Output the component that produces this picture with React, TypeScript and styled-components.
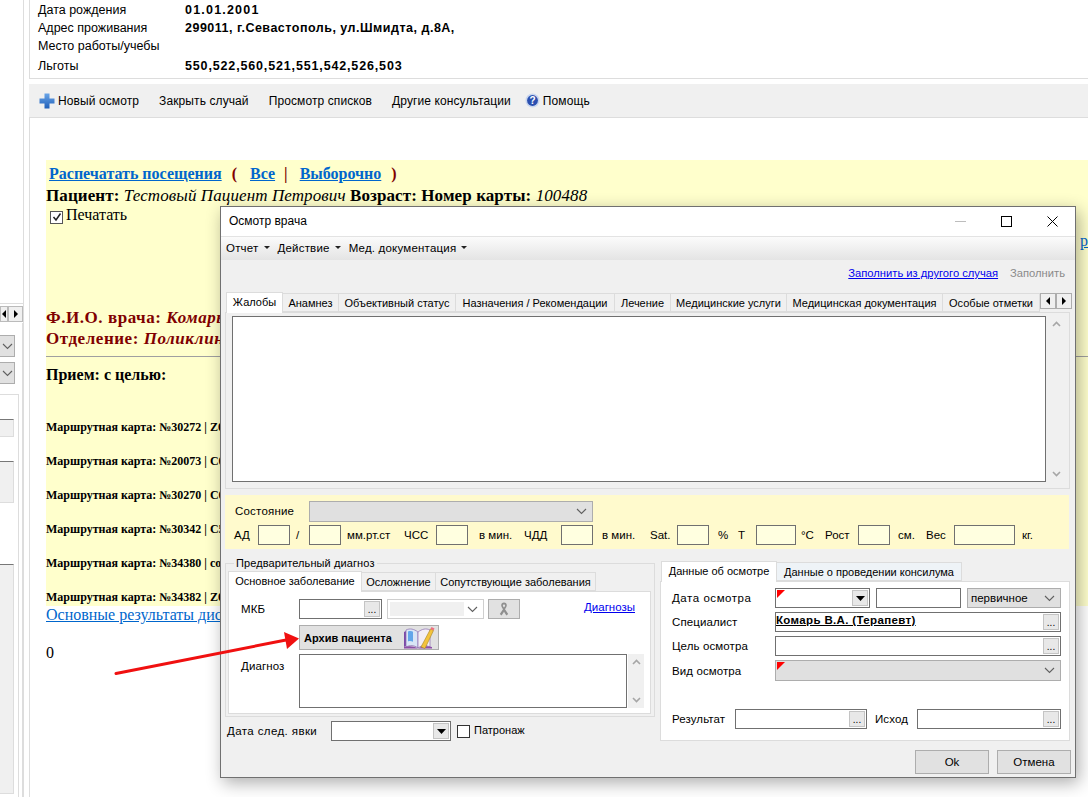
import styled, { createGlobalStyle } from 'styled-components';

const GlobalStyle = createGlobalStyle`
  html, body { margin: 0; padding: 0; background: #fff; }
  * { box-sizing: border-box; }
  body { font-family: "Liberation Sans", Arial, sans-serif; font-size: 12px; color: #000; }
`;

const flagCorner = `
  &::before {
    content: "";
    position: absolute;
    left: 1px;
    top: 1px;
    border-top: 8px solid #f00;
    border-right: 8px solid transparent;
  }
`;

const Page = styled.div`
  position: relative;
  display: flex;
  width: 1088px;
  height: 797px;
  overflow: hidden;
  background: #fff;
`;

/* left, cut off panel */
const Sidebar = styled.aside`
  flex: 0 0 29px;
  display: flex;
  flex-direction: column;
`;
const SideColumn = styled.div`
  width: 24px;
  flex: 1;
  padding-top: 303px;
  border-right: 1px solid #ddd;
  display: flex;
  flex-direction: column;
`;
const SideScroll = styled.div`
  display: flex;
  height: 20px;
  border-top: 1px solid #ddd;
  padding-top: 2px;
  width: 24px;
`;
const SideArrow = styled.div<{ $w: number }>`
  width: ${p => p.$w}px;
  height: 16px;
  background: #f0f0f0;
  border: 1px solid #bbb;
  display: flex;
  align-items: center;
  justify-content: center;
`;
const SidePanel = styled.div`
  flex: 1;
  width: 23px;
  border-right: 1px solid #ddd;
  padding-top: 12px;
`;
const SideSelect = styled.div`
  width: 15px;
  height: 22px;
  margin-bottom: 5px;
  background: #e1e1e1;
  border: 1px solid #adadad;
  border-left: 0;
  display: flex;
  align-items: center;
  justify-content: center;
  color: #666;
`;
const SideBox = styled.div`
  margin-top: 10px;
  width: 19px;
  height: 100%;
  border-right: 1px solid #ddd;
  border-top: 1px solid #ddd;
`;
const SideInput = styled.div<{ $top: number; $h: number }>`
  width: 14px;
  height: ${p => p.$h}px;
  margin-top: ${p => p.$top}px;
  background: #f0f0f0;
  border-top: 1px solid #777;
  border-right: 1px solid #ddd;
  border-bottom: 1px solid #ddd;
`;

const Main = styled.div`
  flex: 1;
  min-width: 0;
  display: flex;
  flex-direction: column;
`;
const InfoBox = styled.section`
  height: 79px;
  border-left: 1px solid #ddd;
  border-bottom: 1px solid #ddd;
  padding: 1px 0 0 8px;
`;
const InfoRow = styled.div<{ $h?: number }>`
  display: flex;
  align-items: center;
  height: ${p => p.$h ?? 18}px;
`;
const InfoLabel = styled.span`
  width: 147px;
  font-size: 12.5px;
  white-space: nowrap;
`;
const InfoValue = styled.b<{ $ls: number }>`
  font-size: 12.5px;
  letter-spacing: ${p => p.$ls}px;
`;
const Toolbar = styled.nav`
  margin-top: 5px;
  height: 33px;
  background: #f0f0f0;
  display: flex;
  align-items: center;
  padding-left: 10px;
  gap: 20px;
`;
const ToolItem = styled.span<{ $shift?: number }>`
  display: flex;
  align-items: center;
  gap: 3px;
  margin-left: ${p => p.$shift ?? 0}px;
  font-size: 12px;
  letter-spacing: 0.1px;
`;
const Content = styled.section`
  flex: 1;
  border-left: 1px solid #ddd;
  border-top: 1px solid #ddd;
  padding: 42px 0 0 16px;
  font-family: "Liberation Serif", "Times New Roman", serif;
  font-size: 16px;
`;
const Report = styled.div`
  height: 446px;
  background: #ffffcc;
  padding-top: 3px;
`;
const ReportLine = styled.div<{ $h?: number; $indent?: number; $top?: number; $size?: number; $ls?: number }>`
  height: ${p => p.$h ?? 22}px;
  line-height: ${p => p.$h ?? 22}px;
  margin-top: ${p => p.$top ?? 0}px;
  padding-left: ${p => p.$indent ?? 0}px;
  font-size: ${p => p.$size ?? 16}px;
  letter-spacing: ${p => p.$ls ?? 0}px;
  white-space: nowrap;
`;
const PrintLink = styled.a`
  color: #0066cc;
  font-weight: bold;
  text-decoration: underline;
`;
const Paren = styled.b`
  color: #800000;
  margin: 0 13px 0 10px;
`;
const Bar = styled.b`
  color: #800000;
  margin: 0 12px 0 9px;
`;
const PrintCheck = styled.span`
  display: inline-flex;
  align-items: center;
  justify-content: center;
  width: 13px;
  height: 13px;
  border: 1px solid #555;
  background: #fff;
  margin-right: 3px;
  vertical-align: -2px;
`;
const OverflowLink = styled.div`
  height: 19px;
  margin-top: 7px;
  text-align: right;
  color: #0066cc;
  text-decoration: underline;
  line-height: 19px;
`;
const Doctor = styled.div`
  margin-top: 57px;
  color: #800000;
  font-weight: bold;
  font-size: 17px;
  letter-spacing: 0.55px;
  line-height: 21px;
  white-space: nowrap;
`;
const Rule = styled.hr`
  margin: 7px 0;
  border: 0;
  border-top: 1px solid #a0a0a0;
`;
const Purpose = styled.div`
  font-weight: bold;
  line-height: 22px;
  height: 22px;
  margin-bottom: 30px;
`;
const RouteLine = styled.div`
  height: 34px;
  line-height: 22px;
  font-size: 12px;
  font-weight: bold;
  white-space: nowrap;
`;
const ResultsLink = styled.a`
  display: block;
  height: 18px;
  line-height: 18px;
  color: #0066cc;
  text-decoration: underline;
  white-space: nowrap;
`;
const Zero = styled.div`
  margin-top: 19px;
  line-height: 20px;
`;

/* the dialog window lies over the page */
const Dialog = styled.div`
  position: absolute;
  left: 220px;
  top: 206px;
  width: 856px;
  height: 572px;
  background: #f0f0f0;
  border: 1px solid #707070;
  box-shadow: 3px 5px 16px rgba(0, 0, 0, 0.32);
  display: flex;
  flex-direction: column;
  font-size: 11.5px;
`;
const TitleBar = styled.header`
  height: 30px;
  flex: none;
  background: #fff;
  border-bottom: 1px solid #e3e3e3;
  display: flex;
  align-items: center;
  padding-left: 8px;
`;
const Title = styled.span`
  flex: 1;
  font-size: 12px;
  padding-bottom: 2px;
`;
const WinButton = styled.span`
  width: 46px;
  height: 29px;
  display: flex;
  align-items: center;
  justify-content: center;
`;
const MenuBar = styled.div`
  height: 23px;
  flex: none;
  background: linear-gradient(#fbfbfb, #e4e4e4);
  display: flex;
  align-items: center;
  padding: 0 0 2px 5px;
  gap: 8px;
  font-size: 11.5px;
  letter-spacing: 0.2px;
`;
const MenuItem = styled.span`
  display: flex;
  align-items: center;
  gap: 5px;
`;
const Caret = styled.i`
  width: 0;
  height: 0;
  border-left: 3px solid transparent;
  border-right: 3px solid transparent;
  border-top: 3px solid #222;
`;
const FillRow = styled.div`
  height: 31px;
  flex: none;
  display: flex;
  justify-content: flex-end;
  align-items: center;
  gap: 12px;
  padding: 0 10px 5px 0;
  font-size: 11.2px;
`;
const BlueLink = styled.a`
  color: #0000ee;
  text-decoration: underline;
`;
const Muted = styled.span`
  color: #8a8a8a;
`;
const TabStrip = styled.div<{ $pad?: number; $h?: number }>`
  display: flex;
  align-items: flex-end;
  flex: none;
  height: ${p => p.$h ?? 21}px;
  padding-left: ${p => p.$pad ?? 5}px;
  position: relative;
  z-index: 1;
`;
const Tab = styled.div<{ $w: number; $active?: boolean }>`
  flex: 0 0 ${p => p.$w}px;
  height: ${p => (p.$active ? 21 : 19)}px;
  margin-bottom: ${p => (p.$active ? -1 : 0)}px;
  background: ${p => (p.$active ? '#fff' : '#f0f0f0')};
  border: 1px solid #dcdcdc;
  border-bottom: ${p => (p.$active ? '0' : '1px solid #dcdcdc')};
  border-left: ${p => (p.$active ? '1px solid #dcdcdc' : '0')};
  display: flex;
  align-items: center;
  justify-content: center;
  white-space: nowrap;
  font-size: 11px;
  padding-bottom: ${p => (p.$active ? 3 : 0)}px;
`;
const TabScroll = styled.div`
  display: flex;
  margin: 0 4px 3px auto;
`;
const TabArrow = styled.span`
  width: 16px;
  height: 16px;
  background: #f0f0f0;
  border: 1px solid #adadad;
  display: flex;
  align-items: center;
  justify-content: center;
`;
const TriangleLeft = styled.i`
  width: 0;
  height: 0;
  border-top: 4px solid transparent;
  border-bottom: 4px solid transparent;
  border-right: 4px solid #000;
`;
const TriangleRight = styled.i`
  width: 0;
  height: 0;
  border-top: 4px solid transparent;
  border-bottom: 4px solid transparent;
  border-left: 4px solid #000;
`;
const ComplaintsPanel = styled.div`
  margin: 0 5px 0 4px;
  height: 177px;
  flex: none;
  background: #f0f0f0;
  border: 1px solid #dcdcdc;
  padding: 3px 5px 0 6px;
  display: flex;
  gap: 2px;
`;
const TextBox = styled.div<{ $w?: number; $h: number }>`
  width: ${p => (p.$w ? `${p.$w}px` : 'auto')};
  flex: ${p => (p.$w ? 'none' : 1)};
  height: ${p => p.$h}px;
  background: #fff;
  border: 1px solid #707070;
`;
const ScrollBar = styled.div<{ $h: number }>`
  width: 16px;
  height: ${p => p.$h}px;
  background: #f0f0f0;
  display: flex;
  flex-direction: column;
  justify-content: space-between;
  align-items: center;
  padding: 5px 0;
`;
const Vitals = styled.div`
  margin: 6px 6px 0 4px;
  height: 54px;
  flex: none;
  background: #fffacd;
  padding: 4px 0 0 10px;
`;
const StateRow = styled.div`
  display: flex;
  align-items: center;
  height: 24px;
  font-size: 11.5px;
`;
const StateLabel = styled.span`
  width: 74px;
  letter-spacing: 0.2px;
`;
const VitalsRow = styled.div`
  display: flex;
  align-items: center;
  height: 20px;
  margin: 2px 0 0 -1px;
  font-size: 11.5px;
`;
const Cell = styled.span<{ $w: number; $pad?: number }>`
  flex: 0 0 ${p => p.$w}px;
  padding-left: ${p => p.$pad ?? 0}px;
  white-space: nowrap;
`;
const VitalInput = styled.span<{ $w: number }>`
  flex: 0 0 ${p => p.$w}px;
  height: 20px;
  background: #ffffe0;
  border: 1px solid #707070;
`;
const Select = styled.div<{ $w?: number; $h?: number; $flag?: boolean; $left?: number }>`
  position: relative;
  width: ${p => (p.$w ? `${p.$w}px` : 'auto')};
  flex: ${p => (p.$w ? 'none' : 1)};
  height: ${p => p.$h ?? 20}px;
  margin-left: ${p => p.$left ?? 0}px;
  background: #e0e0e0;
  border: 1px solid #adadad;
  display: flex;
  align-items: center;
  justify-content: space-between;
  padding: 0 5px 0 3px;
  ${p => (p.$flag ? flagCorner : '')}
`;
const Forms = styled.div`
  display: flex;
  margin: 7px 5px 0 4px;
  gap: 5px;
`;
const LeftColumn = styled.div`
  flex: 0 0 430px;
`;
const Group = styled.fieldset`
  margin: 0;
  padding: 0 3px 0 2px;
  height: 161px;
  border: 1px solid #dcdcdc;
`;
const GroupTitle = styled.legend`
  margin-left: 6px;
  padding: 0 2px;
  font-size: 11px;
  line-height: 14px;
  letter-spacing: 0.1px;
`;
const FormPanel = styled.div<{ $h: number; $pad: string }>`
  height: ${p => p.$h}px;
  background: #fff;
  border: 1px solid #dcdcdc;
  padding: ${p => p.$pad};
  display: flex;
  flex-direction: column;
`;
const FormRow = styled.div<{ $gap?: number; $top?: number; $start?: boolean }>`
  display: flex;
  align-items: ${p => (p.$start ? 'flex-start' : 'center')};
  gap: ${p => p.$gap ?? 0}px;
  margin-top: ${p => p.$top ?? 0}px;
`;
const FieldLabel = styled.span<{ $w: number; $top?: number; $ls?: number; $pad?: number }>`
  flex: 0 0 ${p => p.$w}px;
  padding-top: ${p => p.$top ?? 0}px;
  padding-left: ${p => p.$pad ?? 0}px;
  font-size: 11.5px;
  letter-spacing: ${p => p.$ls ?? 0.1}px;
  white-space: nowrap;
`;
const Field = styled.div<{ $w?: number; $flag?: boolean; $grow?: boolean; $left?: number }>`
  position: relative;
  width: ${p => (p.$w ? `${p.$w}px` : 'auto')};
  flex: ${p => (p.$grow ? 1 : 'none')};
  height: 20px;
  margin-left: ${p => p.$left ?? 0}px;
  background: #fff;
  border: 1px solid #707070;
  display: flex;
  justify-content: space-between;
  ${p => (p.$flag ? flagCorner : '')}
`;
const FieldText = styled.b`
  font-size: 11.5px;
  line-height: 14px;
  height: 14px;
  text-decoration: underline;
  letter-spacing: 0.35px;
`;
const DotsButton = styled.span`
  margin: 1px 1px 1px auto;
  width: 16px;
  height: 16px;
  background: #e8e8e8;
  border: 1px solid #c4c4c4;
  display: flex;
  justify-content: center;
  align-items: flex-end;
  font-size: 10px;
  line-height: 12px;
`;
const DropButton = styled(DotsButton)`
  align-items: center;
`;
const DisabledSelect = styled.div`
  width: 97px;
  height: 20px;
  margin-left: 5px;
  border: 1px solid #cfcfcf;
  padding: 2px 5px 2px 2px;
  display: flex;
  align-items: center;
  justify-content: space-between;
`;
const DisabledFill = styled.span`
  width: 74px;
  height: 14px;
  background: #f0f0f0;
`;
const IconButton = styled.div`
  width: 32px;
  height: 20px;
  margin-left: 4px;
  background: #e1e1e1;
  border: 1px solid #adadad;
  display: flex;
  align-items: center;
  justify-content: center;
`;
const DiagLink = styled(BlueLink)`
  margin: 0 10px 4px auto;
  font-size: 11.5px;
`;
const ArchiveButton = styled.div`
  margin-left: 58px;
  width: 140px;
  height: 25px;
  background: #e1e1e1;
  border: 1px solid #adadad;
  display: flex;
  align-items: center;
  justify-content: space-between;
  padding: 0 3px 0 4px;
  font-weight: bold;
  font-size: 11px;
`;
const NextVisit = styled.div`
  display: flex;
  align-items: center;
  margin-top: 4px;
  height: 20px;
  padding-left: 2px;
`;
const CheckBox = styled.span`
  width: 13px;
  height: 13px;
  margin: 0 4px 0 6px;
  background: #fff;
  border: 1px solid #333;
`;
const CheckLabel = styled.span`
  font-size: 11px;
  padding-bottom: 3px;
`;
const RightColumn = styled.div`
  flex: 1;
  margin-top: 5px;
`;
const ConsultTab = styled(Tab)`
  background: #eef3f7;
`;
const Footer = styled.footer`
  display: flex;
  justify-content: flex-end;
  gap: 8px;
  margin-top: 9px;
  padding-right: 4px;
`;
const FooterButton = styled.div`
  width: 74px;
  height: 24px;
  background: #e1e1e1;
  border: 1px solid #adadad;
  display: flex;
  align-items: center;
  justify-content: center;
  font-size: 11.5px;
`;
const ArrowLayer = styled.svg`
  position: absolute;
  left: 0;
  top: 0;
  pointer-events: none;
`;

const Chevron = () => (
  <svg width="11" height="7" viewBox="0 0 11 7">
    <path d="M1 1l4.5 4.5L10 1" fill="none" stroke="#606060" strokeWidth="1.1" />
  </svg>
);

const ScrollUp = () => (
  <svg width="9" height="6" viewBox="0 0 9 6">
    <path d="M1 5l3.5-3.5L8 5" fill="none" stroke="#a6a6a6" strokeWidth="1.6" />
  </svg>
);

const ScrollDown = () => (
  <svg width="9" height="6" viewBox="0 0 9 6">
    <path d="M1 1l3.5 3.5L8 1" fill="none" stroke="#a6a6a6" strokeWidth="1.6" />
  </svg>
);

const DropArrow = () => (
  <svg width="9" height="5" viewBox="0 0 9 5">
    <path d="M0 0h9L4.5 5z" fill="#000" />
  </svg>
);

const PlusIcon = () => (
  <svg width="16" height="16" viewBox="0 0 16 16">
    <defs>
      <linearGradient id="plusFill" x1="0" y1="0" x2="0" y2="1">
        <stop offset="0" stopColor="#6aa5e8" />
        <stop offset="1" stopColor="#1f5fb8" />
      </linearGradient>
    </defs>
    <path d="M5.5 0.5h5v5h5v5h-5v5h-5v-5h-5v-5h5z" fill="url(#plusFill)" />
  </svg>
);

const HelpIcon = () => (
  <svg width="15" height="15" viewBox="0 0 15 15">
    <circle cx="7.5" cy="7.5" r="7" fill="#c9d6ee" />
    <circle cx="7.5" cy="7.5" r="5.4" fill="#2a4fb0" />
    <text x="7.5" y="11" textAnchor="middle" fontSize="10" fontWeight="bold" fontFamily="Liberation Sans" fill="#fff">?</text>
  </svg>
);

const RibbonIcon = () => (
  <svg width="12" height="16" viewBox="0 0 12 16">
    <path
      d="M6 1.5c-1.8 0-2.8 1.2-2.8 2.7 0 1.3 1 2.8 1.8 4L1.8 13l1.8 1.6L6 10.8l2.4 3.8 1.8-1.6L7 8.2c.8-1.2 1.8-2.7 1.8-4C8.800 2.700 7.800 1.500 6 1.500z"
      fill="#8f8f8f"
    />
    <path d="M6 3.400c-.7 0-1.100.400-1.100 1 0 .500.500 1.400 1.100 2.200.6-.8 1.100-1.700 1.100-2.200 0-.6-.4-1-1.100-1z" fill="#e1e1e1" />
  </svg>
);

const BookIcon = () => (
  <svg width="32" height="24" viewBox="0 0 32 24">
    <path d="M1 21V6l2-1v15z" fill="#7b4aa8" />
    <path d="M3 4c4-2 8-1 12 2v16c-4-3-8-3-12-1z" fill="#d9e6f6" stroke="#8a6bb0" strokeWidth="0.7" />
    <path d="M5 5.500c2-.8 4-.4 5 .3v10c-1.500-.8-3.500-1-5-.4z" fill="#62a6ea" />
    <path d="M15 6c4-3 8-4 12-2v17c-4-2-8-2-12 1z" fill="#f3eef5" stroke="#8a6bb0" strokeWidth="0.7" />
    <path d="M1 21c5-1.500 10-1 14 1.500 4-2.500 9-3 14-1.500v1.500H1z" fill="#8d4fa8" />
    <path d="M18 21L27.500 3l3 1.500L22 22.500z" fill="#f3c33c" stroke="#a58428" strokeWidth="0.6" />
    <path d="M27.500 3l1-2 3 1.500-1 2z" fill="#ef6f7f" />
  </svg>
);

const complaintTabs: [string, number][] = [
  ['Анамнез', 56],
  ['Объективный статус', 117],
  ['Назначения / Рекомендации', 159],
  ['Лечение', 56],
  ['Медицинские услуги', 116],
  ['Медицинская документация', 156],
  ['Особые отметки', 97],
];

const routes = ['№30272 | Z0', '№20073 | C0', '№30270 | C0', '№30342 | C5', '№34380 | со', '№34382 | Z0'];

export default function App() {
  return (
    <Page>
      <GlobalStyle />
      <Sidebar>
        <SideColumn>
          <SideScroll>
            <SideArrow $w={8}><TriangleLeft /></SideArrow>
            <SideArrow $w={15}><TriangleRight /></SideArrow>
          </SideScroll>
          <SidePanel>
            <SideSelect><Chevron /></SideSelect>
            <SideSelect><Chevron /></SideSelect>
            <SideBox>
              <SideInput $top={24} $h={18} />
              <SideInput $top={24} $h={42} />
              <SideInput $top={61} $h={230} />
            </SideBox>
          </SidePanel>
        </SideColumn>
      </Sidebar>

      <Main>
        <InfoBox>
          <InfoRow><InfoLabel>Дата рождения</InfoLabel><InfoValue $ls={1.2}>01.01.2001</InfoValue></InfoRow>
          <InfoRow><InfoLabel>Адрес проживания</InfoLabel><InfoValue $ls={0.5}>299011, г.Севастополь, ул.Шмидта, д.8А,</InfoValue></InfoRow>
          <InfoRow><InfoLabel>Место работы/учебы</InfoLabel></InfoRow>
          <InfoRow $h={22}><InfoLabel>Льготы</InfoLabel><InfoValue $ls={0.85}>550,522,560,521,551,542,526,503</InfoValue></InfoRow>
        </InfoBox>

        <Toolbar>
          <ToolItem><PlusIcon />Новый осмотр</ToolItem>
          <ToolItem>Закрыть случай</ToolItem>
          <ToolItem>Просмотр списков</ToolItem>
          <ToolItem>Другие консультации</ToolItem>
          <ToolItem $shift={-6}><HelpIcon />Помощь</ToolItem>
        </Toolbar>

        <Content>
          <Report>
            <ReportLine $indent={3}>
              <PrintLink>Распечатать посещения</PrintLink>
              <Paren>(</Paren>
              <PrintLink>Все</PrintLink>
              <Bar>|</Bar>
              <PrintLink>Выборочно</PrintLink>
              <Paren>)</Paren>
            </ReportLine>
            <ReportLine $size={17} $ls={0.1}>
              <b>Пациент:</b> <i>Тестовый Пациент Петрович</i> <b>Возраст: Номер карты:</b> <i>100488</i>
            </ReportLine>
            <ReportLine $indent={4} $h={19} $top={-2}>
              <PrintCheck>
                <svg width="10" height="10" viewBox="0 0 10 10">
                  <path d="M1.500 5l2.500 3L8.500 1.500" fill="none" stroke="#222" strokeWidth="1.5" />
                </svg>
              </PrintCheck>
              Печатать
            </ReportLine>
            <OverflowLink>р</OverflowLink>
            <Doctor>
              <div>Ф.И.О. врача: <i>Комарь</i></div>
              <div>Отделение: <i>Поликлин</i></div>
            </Doctor>
            <Rule />
            <Purpose>Прием: с целью:</Purpose>
            {routes.map(route => (
              <RouteLine key={route}>Маршрутная карта: {route}</RouteLine>
            ))}
          </Report>
          <ResultsLink>Основные результаты дис</ResultsLink>
          <Zero>0</Zero>
        </Content>
      </Main>

      <Dialog>
        <TitleBar>
          <Title>Осмотр врача</Title>
          <WinButton>
            <svg width="11" height="11" viewBox="0 0 11 11"><path d="M0 5.500h11" stroke="#bdbdbd" /></svg>
          </WinButton>
          <WinButton>
            <svg width="11" height="11" viewBox="0 0 11 11"><rect x="0.500" y="0.500" width="10" height="10" fill="none" stroke="#000" /></svg>
          </WinButton>
          <WinButton>
            <svg width="11" height="11" viewBox="0 0 11 11"><path d="M0.500 0.500l10 10M10.500 0.500l-10 10" stroke="#000" /></svg>
          </WinButton>
        </TitleBar>
        <MenuBar>
          <MenuItem>Отчет <Caret /></MenuItem>
          <MenuItem>Действие <Caret /></MenuItem>
          <MenuItem>Мед. документация <Caret /></MenuItem>
        </MenuBar>
        <FillRow>
          <BlueLink>Заполнить из другого случая</BlueLink>
          <Muted>Заполнить</Muted>
        </FillRow>
        <TabStrip>
          <Tab $w={57} $active>Жалобы</Tab>
          {complaintTabs.map(([name, w]) => (
            <Tab key={name} $w={w}>{name}</Tab>
          ))}
          <TabScroll>
            <TabArrow><TriangleLeft /></TabArrow>
            <TabArrow><TriangleRight /></TabArrow>
          </TabScroll>
        </TabStrip>
        <ComplaintsPanel>
          <TextBox $h={166} />
          <ScrollBar $h={166}><ScrollUp /><ScrollDown /></ScrollBar>
        </ComplaintsPanel>
        <Vitals>
          <StateRow>
            <StateLabel>Состояние</StateLabel>
            <Select $w={284} $h={21}><span /><Chevron /></Select>
          </StateRow>
          <VitalsRow>
            <Cell $w={24}>АД</Cell><VitalInput $w={32} />
            <Cell $w={19} $pad={6}>/</Cell><VitalInput $w={32} />
            <Cell $w={63} $pad={6}>мм.рт.ст</Cell>
            <Cell $w={32}>ЧСС</Cell><VitalInput $w={32} />
            <Cell $w={56} $pad={11}>в мин.</Cell>
            <Cell $w={37}>ЧДД</Cell><VitalInput $w={32} />
            <Cell $w={57} $pad={9}>в мин.</Cell>
            <Cell $w={27}>Sat.</Cell><VitalInput $w={32} />
            <Cell $w={29} $pad={9}>%</Cell>
            <Cell $w={18}>Т</Cell><VitalInput $w={40} />
            <Cell $w={29} $pad={5}>°C</Cell>
            <Cell $w={33}>Рост</Cell><VitalInput $w={32} />
            <Cell $w={36} $pad={8}>см.</Cell>
            <Cell $w={28}>Вес</Cell><VitalInput $w={61} />
            <Cell $w={30} $pad={7}>кг.</Cell>
          </VitalsRow>
        </Vitals>
        <Forms>
          <LeftColumn>
            <Group>
              <GroupTitle>Предварительный диагноз</GroupTitle>
              <TabStrip $pad={0} $h={21}>
                <Tab $w={134} $active>Основное заболевание</Tab>
                <Tab $w={74}>Осложнение</Tab>
                <Tab $w={160}>Сопутствующие заболевания</Tab>
              </TabStrip>
              <FormPanel $h={123} $pad="7px 5px 0 12px">
                <FormRow>
                  <FieldLabel $w={58}>МКБ</FieldLabel>
                  <Field $w={83}><DotsButton>...</DotsButton></Field>
                  <DisabledSelect><DisabledFill /><Chevron /></DisabledSelect>
                  <IconButton><RibbonIcon /></IconButton>
                  <DiagLink>Диагнозы</DiagLink>
                </FormRow>
                <FormRow $top={6}>
                  <ArchiveButton>Архив пациента<BookIcon /></ArchiveButton>
                </FormRow>
                <FormRow $top={4} $start $gap={1}>
                  <FieldLabel $w={57} $top={6}>Диагноз</FieldLabel>
                  <TextBox $w={328} $h={54} />
                  <ScrollBar $h={54}><ScrollUp /><ScrollDown /></ScrollBar>
                </FormRow>
              </FormPanel>
            </Group>
            <NextVisit>
              <FieldLabel $w={104} $ls={0.4}>Дата след. явки</FieldLabel>
              <Field $w={120}><DropButton><DropArrow /></DropButton></Field>
              <CheckBox />
              <CheckLabel>Патронаж</CheckLabel>
            </NextVisit>
          </LeftColumn>
          <RightColumn>
            <TabStrip $pad={1} $h={20}>
              <Tab $w={116} $active>Данные об осмотре</Tab>
              <ConsultTab $w={185}>Данные о проведении консилума</ConsultTab>
            </TabStrip>
            <FormPanel $h={160} $pad="6px 8px 0 11px">
              <FormRow>
                <FieldLabel $w={103} $ls={0.55}>Дата осмотра</FieldLabel>
                <Field $w={95} $flag><DropButton><DropArrow /></DropButton></Field>
                <Field $w={85} $left={6} />
                <Select $w={94} $left={6}>первичное<Chevron /></Select>
              </FormRow>
              <FormRow $top={4}>
                <FieldLabel $w={103}>Специалист</FieldLabel>
                <Field $grow><FieldText>Комарь В.А. (Терапевт)</FieldText><DotsButton>...</DotsButton></Field>
              </FormRow>
              <FormRow $top={4}>
                <FieldLabel $w={103}>Цель осмотра</FieldLabel>
                <Field $grow><DotsButton>...</DotsButton></Field>
              </FormRow>
              <FormRow $top={4}>
                <FieldLabel $w={103}>Вид осмотра</FieldLabel>
                <Select $h={21} $flag><span /><Chevron /></Select>
              </FormRow>
              <FormRow $top={28}>
                <FieldLabel $w={63}>Результат</FieldLabel>
                <Field $w={132}><DotsButton>...</DotsButton></Field>
                <FieldLabel $w={50} $pad={8}>Исход</FieldLabel>
                <Field $grow><DotsButton>...</DotsButton></Field>
              </FormRow>
            </FormPanel>
          </RightColumn>
        </Forms>
        <Footer>
          <FooterButton>Ok</FooterButton>
          <FooterButton>Отмена</FooterButton>
        </Footer>
      </Dialog>

      <ArrowLayer width="1088" height="797" viewBox="0 0 1088 797">
        <path d="M116 673.500L286 640" stroke="#f01010" strokeWidth="3" strokeLinecap="round" />
        <path d="M299 638.500L284 632l3 17z" fill="#f01010" />
      </ArrowLayer>
    </Page>
  );
}
